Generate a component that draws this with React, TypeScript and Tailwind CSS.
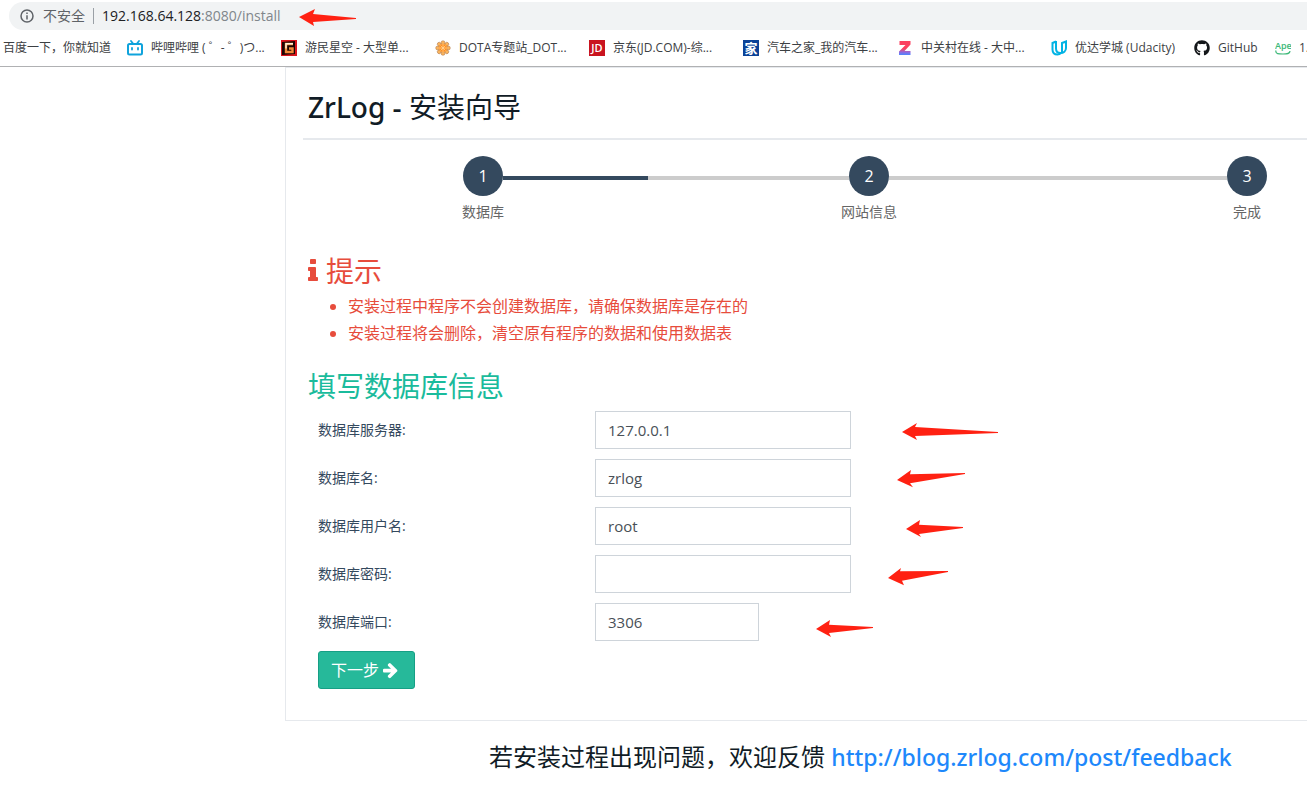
import React, { FC, ReactNode } from 'react';
import { FaGithub } from 'react-icons/fa';

const BilibiliIcon = () => (
  <svg viewBox="0 0 16 16" className="h-4 w-4 shrink-0" fill="none" stroke="#0fa3dc" strokeLinecap="round">
    <rect x="1" y="4" width="14" height="10.500" rx="1.500" strokeWidth="2" />
    <path d="M4 1l2 2.500M12 1l-2 2.500" strokeWidth="1.800" />
    <path d="M5 8v1.500M11 8v1.500" strokeWidth="1.800" />
  </svg>
);

const GamerskyIcon = () => (
  <svg viewBox="0 0 16 16" className="h-4 w-4 shrink-0">
    <rect width="16" height="16" fill="#d9141c" />
    <path d="M1 2l13-1v13l-13 1z" fill="#1c0403" />
    <path d="M12 4H5v8h6.500V8.500H8" fill="none" stroke="#f28a3a" strokeWidth="2.400" />
    <path d="M12 3.800H5V8.500" fill="none" stroke="#fff3dc" strokeWidth="1.400" />
  </svg>
);

const petals = [0, 45, 90, 135, 180, 225, 270, 315];

const DotaIcon = () => (
  <svg viewBox="0 0 16 16" className="h-4 w-4 shrink-0">
    {petals.map((a) => (
      <circle key={a} cx="8" cy="2.600" r="1.900" fill="#fbb45c" stroke="#a8734a" strokeWidth="0.500" transform={`rotate(${a} 8 8)`} />
    ))}
    <circle cx="8" cy="8" r="4" fill="#ff8f1f" />
    <path d="M8 4v8M4 8h8M5.500 5.500l5 5M10.500 5.500l-5 5" stroke="#ffd9a0" strokeWidth="0.700" />
  </svg>
);

const JdIcon = () => (
  <span className="flex h-4 w-4 shrink-0 items-center justify-center bg-[#c9141f] text-[11px] leading-4 font-semibold text-white">JD</span>
);

const AutohomeIcon = () => (
  <span className="flex h-4 w-4 shrink-0 items-center justify-center bg-[#0b4297] text-[13px] leading-4 font-bold text-white">家</span>
);

const ZolIcon = () => (
  <svg viewBox="0 0 16 16" className="h-4 w-4 shrink-0">
    <defs>
      <linearGradient id="zol" x1="0" y1="0" x2="0" y2="1">
        <stop offset="0.550" stopColor="#fb4060" />
        <stop offset="0.800" stopColor="#8f6be0" />
        <stop offset="1" stopColor="#4c86ff" />
      </linearGradient>
    </defs>
    <path d="M2.500 1h11v3.500L7.500 11h6v4H2v-3.500L8.500 5h-6z" fill="url(#zol)" />
  </svg>
);

const UdacityIcon = () => (
  <svg viewBox="0 0 16 16" className="h-4 w-4 shrink-0" fill="none" stroke="#02b3e4" strokeWidth="2">
    <path d="M5 1.500L1.500 3v6.500c0 3 2 5 5 5 1.500 0 2.500-.5 3.500-1.500" />
    <path d="M5 1v7.500c0 3 2 4.500 4.500 4.500 3 0 5.500-2 5.500-5V1.500L11 3v9" />
  </svg>
);

const ApeIcon = () => (
  <svg viewBox="0 0 16 16" className="h-4 w-4 shrink-0">
    <text x="0" y="9" fontSize="9" fontWeight="600" fill="#3cb878">Ape</text>
    <path d="M1 10.500C0 14 4 14 8 14s7 0 7-3" fill="none" stroke="#3cb878" strokeWidth="1.200" />
  </svg>
);

const Arrow: FC<{ d: string }> = ({ d }) => (
  <svg viewBox="0 0 150 38" className="h-[38px] w-[150px] shrink-0" fill="#ff2112" aria-hidden="true">
    <path d={d} />
  </svg>
);

const bookmarks: { title: string; icon?: ReactNode; width: string }[] = [
  { title: '百度一下，你就知道', width: 'w-[108px]' },
  { title: '哔哩哔哩 ( ゜- ゜)つ...', icon: <BilibiliIcon />, width: 'w-[114px]' },
  { title: '游民星空 - 大型单...', icon: <GamerskyIcon />, width: 'w-[114px]' },
  { title: 'DOTA专题站_DOT...', icon: <DotaIcon />, width: 'w-[114px]' },
  { title: '京东(JD.COM)-综...', icon: <JdIcon />, width: 'w-[114px]' },
  { title: '汽车之家_我的汽车...', icon: <AutohomeIcon />, width: 'w-[114px]' },
  { title: '中关村在线 - 大中...', icon: <ZolIcon />, width: 'w-[114px]' },
  { title: '优达学城 (Udacity)', icon: <UdacityIcon />, width: 'w-[103px]' },
  { title: 'GitHub', icon: <FaGithub className="h-4 w-4 shrink-0 text-[#14171a]" />, width: 'w-[41px]' },
  { title: '1.', icon: <ApeIcon />, width: 'w-3' },
];

const fields = [
  { id: 'dbHost', label: '数据库服务器:', value: '127.0.0.1', width: 'w-64', arrow: 'M51 21L66 12L64 16L147 21V22L64 25L66 29Z' },
  { id: 'dbName', label: '数据库名:', value: 'zrlog', width: 'w-64', arrow: 'M46 21L60 11L59 15.300L114 14V15L59 24.300L62 28.300Z' },
  { id: 'dbUserName', label: '数据库用户名:', value: 'root', width: 'w-64', arrow: 'M55 22L69 13L68 17.700L112 20V21L68 27L70 30Z' },
  { id: 'dbPassword', label: '数据库密码:', value: '', width: 'w-64', type: 'password', arrow: 'M37 23L50 13L49 16.300L97 16V17L51 25.700L53 30.300Z' },
  { id: 'dbPort', label: '数据库端口:', value: '3306', width: 'w-[164px]', arrow: 'M57 26L71 17L70 21.700L114 24V25L70 30L72 34Z' },
];

const Step: FC<{ no: number; label: string }> = ({ no, label }) => (
  <li className="flex w-10 shrink-0 flex-col items-center">
    <span className="flex h-10 w-10 items-center justify-center rounded-full bg-[#34495e] text-base text-white">{no}</span>
    <span className="mt-1.5 text-sm leading-5 whitespace-nowrap text-[#666]">{label}</span>
  </li>
);

const BrowserBar = () => (
  <header className="overflow-hidden border-b border-[#b0b1b3] bg-white">
    <div className="mt-0.5 ml-[9px] flex h-7 items-center rounded-l-full bg-[#f1f3f4] pl-[11px] text-sm whitespace-nowrap text-[#5f6368]">
      <svg viewBox="0 0 14 14" className="h-3.5 w-3.5 shrink-0" fill="none" stroke="#5f6368" strokeWidth="1.500">
        <circle cx="7" cy="7" r="6" />
        <path d="M7 6.200V10.500M7 3.500V5" />
      </svg>
      <span className="ml-[9px]">不安全</span>
      <span className="mx-2 h-4 w-px bg-[#9aa0a6]" />
      <span className="w-[182px]"><span className="text-[#202124]">192.168.64.128</span><span className="text-[#80868b]">:8080/install</span></span>
      <svg viewBox="0 0 72 28" className="h-7 w-[72px] shrink-0" fill="#ff2112" aria-hidden="true">
        <path d="M15 15L31 7L29 12L72 16V17L29 20L30 24Z" />
      </svg>
    </div>
    <nav className="flex h-9 items-center gap-4 pl-[3px] text-xs text-[#3c4043]">
      {bookmarks.map((b) => (
        <a key={b.title} href="#" className="flex shrink-0 items-center gap-2 whitespace-nowrap">
          {b.icon}
          <span className={b.width}>{b.title}</span>
        </a>
      ))}
    </nav>
  </header>
);

export default function App() {
  return (
    <div className="min-h-screen overflow-x-hidden bg-white font-['Open_Sans','Noto_Sans_CJK_SC',sans-serif] text-[#34495e]">
      <BrowserBar />
      <main className="ml-[285px] border-y border-l border-[#e6e9ed] pb-[31px] pl-[17px]">
        <h2 className="border-b-2 border-[#e6e9ed] pt-[19px] pb-[11px] pl-[5px] font-['Noto_Sans','Noto_Sans_CJK_SC',sans-serif] text-[28px] leading-10 font-medium text-[#111c26]">
          ZrLog - <span className="font-normal">安装向导</span>
        </h2>

        <ol className="mt-4 flex pr-10 pl-40">
          <Step no={1} label="数据库" />
          <li className="mt-5 flex h-1 flex-[346] bg-[#ccc]"><span className="w-[42%] bg-[#34495e]" /></li>
          <Step no={2} label="网站信息" />
          <li className="mt-5 h-1 flex-[338] bg-[#ccc]" />
          <Step no={3} label="完成" />
        </ol>

        <section className="mt-7 pl-[5px] text-[#e74c3c]">
          <h3 className="flex items-center text-[28px] leading-[42px]">
            <svg viewBox="0 0 640 1792" className="mr-2 h-7 w-2.5" fill="currentColor">
              <path d="M640 1344v128q0 26-19 45t-45 19H64q-26 0-45-19t-19-45v-128q0-26 19-45t45-19h64V896H64q-26 0-45-19T0 832V704q0-26 19-45t45-19h384q26 0 45 19t19 45v576h64q26 0 45 19t19 45zM512 192v192q0 26-19 45t-45 19H192q-26 0-45-19t-19-45V192q0-26 19-45t45-19h256q26 0 45 19t19 45z" />
            </svg>
            提示
          </h3>
          <ul className="mt-px list-disc pl-10 text-base leading-[27px]">
            <li>安装过程中程序不会创建数据库，请确保数据库是存在的</li>
            <li>安装过程将会删除，清空原有程序的数据和使用数据表</li>
          </ul>
        </section>

        <h3 className="mt-[18px] pl-[5px] text-[28px] leading-[42px] text-[#1abb9c]">填写数据库信息</h3>
        <form className="mt-1 flex flex-col items-start gap-2.5 pl-[15px]" onSubmit={(e) => e.preventDefault()}>
          {fields.map((f) => (
            <div key={f.id} className="flex items-center">
              <label htmlFor={f.id} className="w-[277px] text-sm">{f.label}</label>
              <input
                id={f.id}
                type={f.type || 'text'}
                defaultValue={f.value}
                className={`${f.width} h-[38px] border border-[#ced4da] px-3 text-[15px] text-[#495057] outline-none`}
              />
              <Arrow d={f.arrow} />
            </div>
          ))}
          <button type="submit" className="flex h-[38px] w-[97px] items-center rounded-[3px] border border-[#169f85] bg-[#26b99a] pl-3 text-base text-white">
            下一步
            <svg viewBox="0 0 1536 1792" className="ml-1 h-[18px] w-[15px]" fill="currentColor">
              <path d="M1472 960q0 54-37 91l-651 651q-39 37-91 37-51 0-90-37l-75-75q-38-38-38-91t38-91l293-293H117q-52 0-84.500-37.500T0 1024V896q0-53 32.500-90.500T117 768h704L528 474q-38-36-38-90t38-90l75-75q38-38 90-38 53 0 91 38l651 651q37 35 37 90z" />
            </svg>
          </button>
        </form>
      </main>
      <footer className="ml-[285px] pt-[18px] pl-[204px] font-['Noto_Sans','Noto_Sans_CJK_SC',sans-serif] text-2xl leading-9 whitespace-nowrap text-[#111c26]">
        若安装过程出现问题，欢迎反馈{' '}
        <a href="http://blog.zrlog.com/post/feedback" className="text-[23px] font-medium text-[#1e88fb]">http://blog.zrlog.com/post/feedback</a>
      </footer>
    </div>
  );
}
